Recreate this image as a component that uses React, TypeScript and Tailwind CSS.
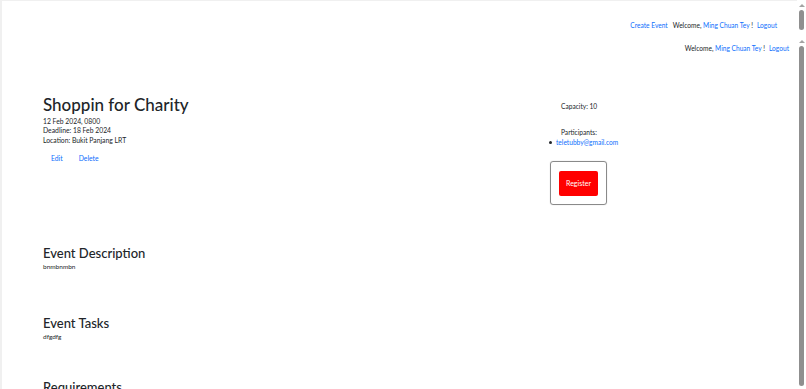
import React from 'react';

const font = "font-['Lato','Segoe_UI',sans-serif]";

const ScrollBar = ({ thumb }: { thumb: string }) => (
  <div className="flex w-[9px] flex-col items-center bg-white">
    <div className="mt-[4px] h-0 w-0 border-x-[3px] border-b-[3px] border-x-transparent border-b-[#a3a3a3]" />
    <div className={`mt-[3px] w-[5px] rounded-full bg-[#8f8f8f] ${thumb}`} />
  </div>
);

const Welcome = ({ withCreate }: { withCreate?: boolean }) => (
  <div className="flex justify-end gap-[4px] text-[6.6px] leading-none text-[#212529]">
    {withCreate && <a className="mr-[1px] text-[#0d6efd]">Create Event</a>}
    <span>
      Welcome, <a className="text-[#0d6efd]">Ming Chuan Tey</a> !
    </span>
    <a className="text-[#0d6efd]">Logout</a>
  </div>
);

export default function App() {
  return (
    <div className={`flex h-[389px] w-[806px] flex-col overflow-hidden bg-white ${font}`}>
      {/* outer page header */}
      <div className="flex h-[36px]">
        <div className="flex-1 border-l-2 border-t border-[#f0f0f0] pr-[20px] pt-[21px]">
          <Welcome withCreate />
        </div>
        <ScrollBar thumb="h-[20px]" />
      </div>

      {/* embedded page */}
      <div className="flex flex-1 overflow-hidden">
        <div className="flex-1 overflow-hidden border-l-2 border-[#f0f0f0] text-[#212529]">
          <div className="pr-[8px] pt-[9px]">
            <Welcome />
          </div>

          <div className="mt-[46px] flex">
            <div className="w-[547px] pl-[41px]">
              <h1 className="-mt-[3px] text-[17px] leading-[20px] font-medium">Shoppin for Charity</h1>
              <div className="mt-[2px] text-[6.8px] leading-[9.5px]">
                <p>12 Feb 2024, 0800</p>
                <p>Deadline: 18 Feb 2024</p>
                <p>Location: Bukit Panjang LRT</p>
              </div>
              <div className="mt-[10px] flex gap-[16px] pl-[8px] text-[6.8px] leading-none text-[#0d6efd]">
                <a>Edit</a>
                <a>Delete</a>
              </div>
            </div>

            <div className="pt-[5px] text-[6.6px] leading-none">
              <p className="pl-[12px]">Capacity: 10</p>
              <p className="mt-[20px] pl-[12px]">Participants:</p>
              <ul className="mt-[3px] flex items-center gap-[4px]">
                <span className="h-[3px] w-[3px] rounded-full bg-[#212529]" />
                <li className="text-[#0d6efd]">teletubby@gmail.com</li>
              </ul>
              <div className="mt-[16px] ml-[1px] flex h-[44px] w-[57px] items-center justify-center rounded-[3px] border border-[#8a8a8a] shadow-[0_0_1px_#bbb]">
                <button className="flex h-[25px] w-[39px] items-center justify-center rounded-[2px] bg-[#ff0000] text-[7px] font-normal text-white">
                  Register
                </button>
              </div>
            </div>
          </div>

          <div className="mt-[39px] pl-[41px]">
            <h2 className="text-[13px] leading-[18px] font-medium">Event Description</h2>
            <p className="mt-[2px] text-[6.5px] leading-none">bnmbnmbn</p>
            <h2 className="mt-[43px] text-[13px] leading-[18px] font-medium">Event Tasks</h2>
            <p className="mt-[2px] text-[6.5px] leading-none">dfgdfg</p>
            <h2 className="mt-[38px] text-[13px] leading-[18px] font-medium">Requirements</h2>
          </div>
        </div>
        <ScrollBar thumb="flex-1 mb-[3px]" />
      </div>
    </div>
  );
}
